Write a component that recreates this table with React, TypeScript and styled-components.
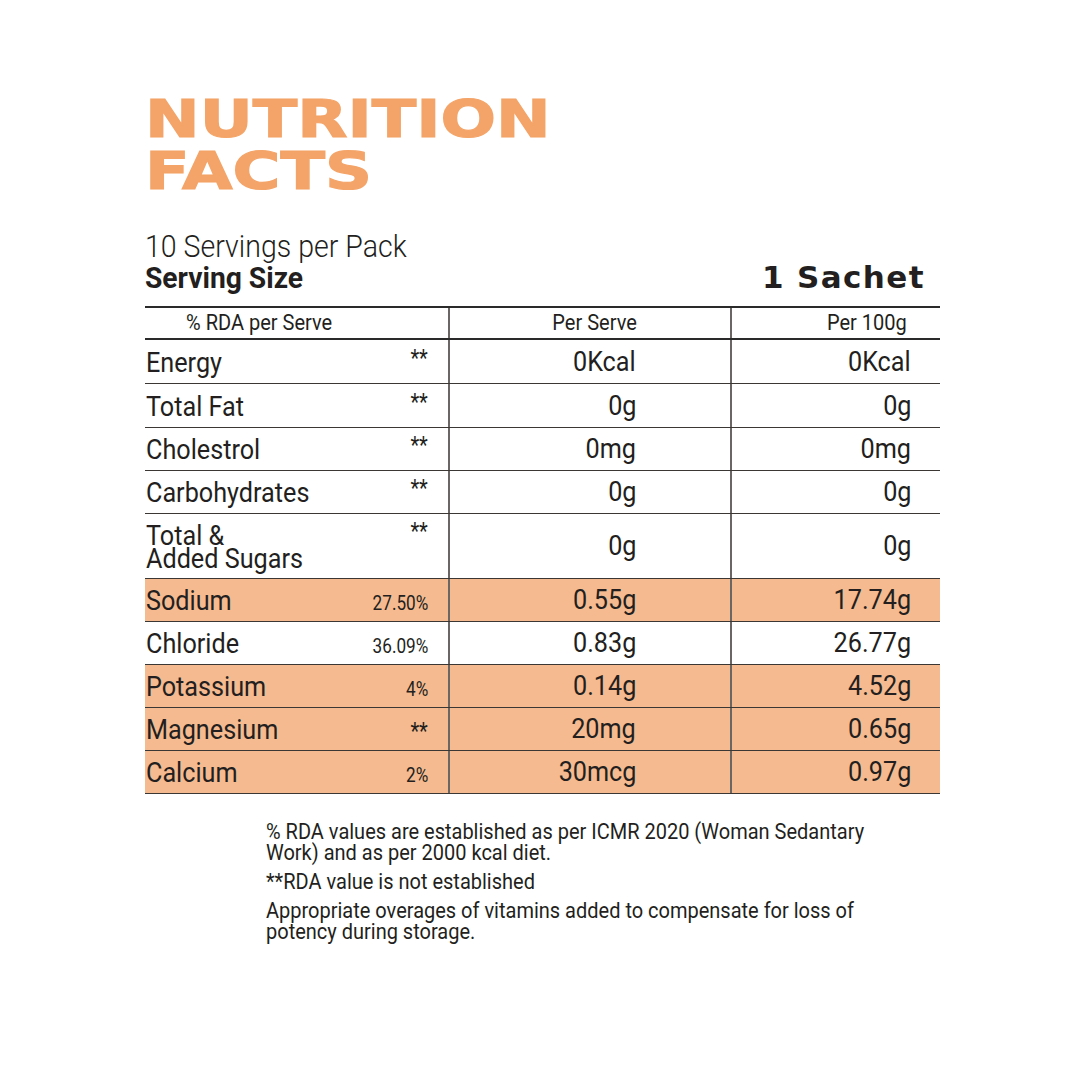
import React from "react";
import styled, { createGlobalStyle } from "styled-components";

const Global = createGlobalStyle`
  html, body { margin: 0; padding: 0; background: #ffffff; }
  body { font-family: Roboto, "Liberation Sans", sans-serif; color: #231f20; }
`;

const ORANGE = "#f5ba8f";
const TITLE = "#f4a468";

const Page = styled.div`
  width: 1080px;
  height: 1080px;
  box-sizing: border-box;
  padding: 94px 0 0 145px;
  display: flex;
  flex-direction: column;
  overflow: hidden;
`;

const Title = styled.h1`
  margin: 0;
  font-family: "DejaVu Sans", sans-serif;
  font-weight: 700;
  font-size: 51px;
  line-height: 52px;
  color: ${TITLE};
  -webkit-text-stroke: 1.2px ${TITLE};
  display: flex;
  flex-direction: column;
  align-items: flex-start;
`;

const TitleLine = styled.span`
  display: inline-block;
  white-space: nowrap;
  transform: scaleX(1.28);
  transform-origin: left center;
`;

const Cond = styled.span<{ $o?: string; $s?: number }>`
  display: inline-block;
  white-space: nowrap;
  transform: scaleX(${(p) => p.$s ?? 0.9});
  transform-origin: ${(p) => p.$o ?? "left"} center;
`;

const Servings = styled.div`
  margin-top: 33px;
  font-size: 31px;
  font-weight: 300;
  line-height: 31px;
`;

const SizeRow = styled.div`
  width: 795px;
  display: flex;
  align-items: baseline;
  justify-content: space-between;
  padding-right: 15px;
  box-sizing: border-box;
`;

const SizeLabel = styled.div`
  font-size: 30px;
  font-weight: 700;
  line-height: 31px;
`;

const SizeValue = styled.div`
  font-family: "DejaVu Sans", sans-serif;
  font-weight: 700;
  font-size: 31px;
  letter-spacing: 1.4px;
  line-height: 31px;
`;

const Table = styled.div`
  margin-top: 13px;
  width: 795px;
  border-top: 2px solid #2a2a2a;
`;

const Grid = styled.div<{ $tint?: boolean; $h: number; $head?: boolean }>`
  display: grid;
  grid-template-columns: 305px 282px 208px;
  height: ${(p) => p.$h}px;
  background: ${(p) => (p.$tint ? ORANGE : "#ffffff")};
  border-bottom: ${(p) => (p.$head ? "2px solid #2a2a2a" : "1px solid #3b3735")};
`;

const Cell = styled.div<{ $pr: number; $pl?: number; $end?: boolean }>`
  display: flex;
  align-items: center;
  justify-content: ${(p) => (p.$end ? "flex-end" : "flex-start")};
  padding: 0 ${(p) => p.$pr}px 0 ${(p) => p.$pl ?? 0}px;
  box-sizing: border-box;
  border-right: 2px solid #6a6664;
  &:last-child { border-right: none; }
`;

const HeadText = styled.div`
  font-size: 22px;
  line-height: 24px;
`;

const NameLine = styled.div`
  flex: 1;
  display: flex;
  align-items: baseline;
  justify-content: space-between;
`;

const Name = styled.div`
  font-size: 28px;
  line-height: 23px;
  padding: 4px 0 3px;
`;

const Rda = styled.div<{ $raised?: boolean; $star?: boolean }>`
  font-size: ${(p) => (p.$star ? 23 : 19.5)}px;
  line-height: 19px;
  align-self: ${(p) => (p.$raised ? "flex-start" : "baseline")};
  margin-top: ${(p) => (p.$raised ? "2px" : "0")};
`;

const Value = styled.div`
  font-size: 28px;
  line-height: 30px;
`;

const Notes = styled.div`
  margin: 27px 0 0 121px;
  font-size: 21.5px;
  line-height: 21px;
  display: flex;
  flex-direction: column;
  gap: 8px;
`;

type RowData = {
  name: React.ReactNode;
  rda: string;
  serve: string;
  per100: string;
  tint?: boolean;
  h: number;
};

const rows: RowData[] = [
  { name: "Energy", rda: "**", serve: "0Kcal", per100: "0Kcal", h: 43 },
  { name: "Total Fat", rda: "**", serve: "0g", per100: "0g", h: 43 },
  { name: "Cholestrol", rda: "**", serve: "0mg", per100: "0mg", h: 42 },
  { name: "Carbohydrates", rda: "**", serve: "0g", per100: "0g", h: 42 },
  {
    name: (
      <>
        Total &amp;
        <br />
        Added Sugars
      </>
    ),
    rda: "**",
    serve: "0g",
    per100: "0g",
    h: 64,
  },
  { name: "Sodium", rda: "27.50%", serve: "0.55g", per100: "17.74g", tint: true, h: 42 },
  { name: "Chloride", rda: "36.09%", serve: "0.83g", per100: "26.77g", h: 42 },
  { name: "Potassium", rda: "4%", serve: "0.14g", per100: "4.52g", tint: true, h: 42 },
  { name: "Magnesium", rda: "**", serve: "20mg", per100: "0.65g", tint: true, h: 42 },
  { name: "Calcium", rda: "2%", serve: "30mcg", per100: "0.97g", tint: true, h: 42 },
];

export default function App() {
  return (
    <>
      <Global />
      <Page>
        <Title>
          <TitleLine>NUTRITION</TitleLine>
          <TitleLine>FACTS</TitleLine>
        </Title>

        <Servings>
          <Cond $s={0.92}>10 Servings per Pack</Cond>
        </Servings>
        <SizeRow>
          <SizeLabel>
            <Cond $s={0.94}>Serving Size</Cond>
          </SizeLabel>
          <SizeValue>1 Sachet</SizeValue>
        </SizeRow>

        <Table>
          <Grid $h={30} $head>
            <Cell $pr={0} $pl={41}>
              <HeadText>
                <Cond $s={0.91}>% RDA per Serve</Cond>
              </HeadText>
            </Cell>
            <Cell $pr={93} $end>
              <HeadText>
                <Cond $o="right" $s={0.91}>Per Serve</Cond>
              </HeadText>
            </Cell>
            <Cell $pr={33} $end>
              <HeadText>
                <Cond $o="right" $s={0.91}>Per 100g</Cond>
              </HeadText>
            </Cell>
          </Grid>
          {rows.map((r, i) => (
            <Grid key={i} $tint={r.tint} $h={r.h}>
              <Cell $pr={20} $pl={1}>
                <NameLine>
                  <Name>
                    <Cond>{r.name}</Cond>
                  </Name>
                  <Rda $raised={i < 5} $star={r.rda === "**"}>
                    <Cond $o="right" $s={0.88}>{r.rda}</Cond>
                  </Rda>
                </NameLine>
              </Cell>
              <Cell $pr={94} $end>
                <Value>
                  <Cond $o="right">{r.serve}</Cond>
                </Value>
              </Cell>
              <Cell $pr={29} $end>
                <Value>
                  <Cond $o="right">{r.per100}</Cond>
                </Value>
              </Cell>
            </Grid>
          ))}
        </Table>

        <Notes>
          <div>
            <Cond $s={0.93}>
              % RDA values are established as per ICMR 2020 (Woman Sedantary
              <br />
              Work) and as per 2000 kcal diet.
            </Cond>
          </div>
          <div>
            <Cond $s={0.93}>**RDA value is not established</Cond>
          </div>
          <div>
            <Cond $s={0.93}>
              Appropriate overages of vitamins added to compensate for loss of
              <br />
              potency during storage.
            </Cond>
          </div>
        </Notes>
      </Page>
    </>
  );
}
